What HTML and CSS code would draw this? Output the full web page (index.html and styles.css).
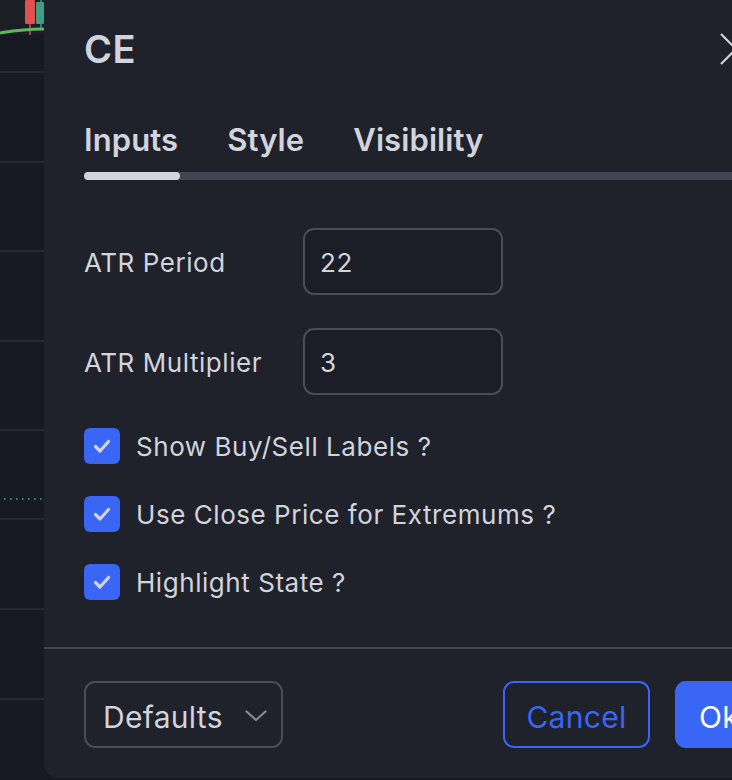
FILE: index.html
```html
<!DOCTYPE html>
<html>
<head>
<meta charset="utf-8">
<link rel="stylesheet" href="styles.css">
</head>
<body>
<div class="page">
  <div class="chart">
    <svg class="chart-svg" width="44" height="780" viewBox="0 0 44 780">
      <rect x="0" y="0" width="44" height="34" fill="#1b1f25"/>
      <g stroke="#262833" stroke-width="2">
        <line x1="0" y1="72" x2="44" y2="72"/>
        <line x1="0" y1="162" x2="44" y2="162"/>
        <line x1="0" y1="251" x2="44" y2="251"/>
        <line x1="0" y1="341" x2="44" y2="341"/>
        <line x1="0" y1="430" x2="44" y2="430"/>
        <line x1="0" y1="519" x2="44" y2="519"/>
        <line x1="0" y1="609" x2="44" y2="609"/>
        <line x1="0" y1="699" x2="44" y2="699"/>
      </g>
      <line x1="30" y1="0" x2="30" y2="35" stroke="#e0514f" stroke-width="1.5"/>
      <rect x="25" y="0" width="10" height="24" fill="#e0514f" rx="1"/>
      <line x1="41" y1="0" x2="41" y2="28" stroke="#3f9e84" stroke-width="1.5"/>
      <rect x="36" y="2" width="8" height="22" fill="#3f9e84" rx="1"/>
      <path d="M0 33 C 12 31, 22 29, 44 29" stroke="#5cb85c" stroke-width="3" fill="none"/>
      <line x1="4" y1="499" x2="44" y2="499" stroke="#4fa89a" stroke-width="1.5" stroke-dasharray="1.5 4.5"/>
    </svg>
  </div>
  <div class="dialog">
    <div class="header">
      <div class="title">CE</div>
      <svg class="close" width="32" height="32" viewBox="0 0 32 32">
        <path d="M1 1 L16 16 L1 31 M31 1 L16 16 L31 31" stroke="#d1d4dc" stroke-width="2.2" fill="none"/>
      </svg>
    </div>
    <div class="tabs">
      <div class="tab">Inputs</div>
      <div class="tab">Style</div>
      <div class="tab">Visibility</div>
    </div>
    <div class="track"><div class="track-active"></div></div>
    <div class="body">
      <div class="field">
        <div class="label">ATR Period</div>
        <div class="input">22</div>
      </div>
      <div class="field">
        <div class="label">ATR Multiplier</div>
        <div class="input">3</div>
      </div>
      <div class="check-row">
        <div class="checkbox"><svg width="36" height="36" viewBox="0 0 36 36"><path d="M11.5 18.5 L16 23 L24.5 13.5" stroke="#d1d4dc" stroke-width="3.2" fill="none" stroke-linecap="round" stroke-linejoin="round"/></svg></div>
        <div class="check-label">Show Buy/Sell Labels ?</div>
      </div>
      <div class="check-row">
        <div class="checkbox"><svg width="36" height="36" viewBox="0 0 36 36"><path d="M11.5 18.5 L16 23 L24.5 13.5" stroke="#d1d4dc" stroke-width="3.2" fill="none" stroke-linecap="round" stroke-linejoin="round"/></svg></div>
        <div class="check-label">Use Close Price for Extremums ?</div>
      </div>
      <div class="check-row">
        <div class="checkbox"><svg width="36" height="36" viewBox="0 0 36 36"><path d="M11.5 18.5 L16 23 L24.5 13.5" stroke="#d1d4dc" stroke-width="3.2" fill="none" stroke-linecap="round" stroke-linejoin="round"/></svg></div>
        <div class="check-label">Highlight State ?</div>
      </div>
    </div>
    <div class="footer">
      <div class="select">
        <span>Defaults</span>
        <svg width="22" height="12" viewBox="0 0 22 12"><path d="M1.5 1.5 L11 10 L20.5 1.5" stroke="#868993" stroke-width="2.2" fill="none" stroke-linecap="round" stroke-linejoin="round"/></svg>
      </div>
      <div class="buttons">
        <div class="btn btn-cancel">Cancel</div>
        <div class="btn btn-ok">Ok</div>
      </div>
    </div>
  </div>
</div>
</body>
</html>
```
FILE: styles.css
```css
* { box-sizing: border-box; }
html, body {
  margin: 0;
  padding: 0;
  width: 732px;
  height: 780px;
  overflow: hidden;
  background: #181a23;
}
body {
  font-family: Inter, "Noto Sans", sans-serif;
  color: #d1d4dc;
}
.page {
  display: flex;
  width: 820px;
  height: 780px;
}
.chart {
  width: 44px;
  flex: 0 0 44px;
  height: 780px;
  background: #181a23;
}
.chart-svg { display: block; }
.dialog {
  flex: 0 0 740px;
  width: 740px;
  height: 778px;
  background: #1f212b;
  border-bottom-left-radius: 14px;
  display: flex;
  flex-direction: column;
}
.header {
  height: 98px;
  display: flex;
  align-items: center;
  padding-left: 40px;
  padding-right: 32px;
}
.title {
  font-size: 38px;
  font-weight: 600;
  letter-spacing: 0.5px;
  line-height: 40px;
  color: #d1d4dc;
}
.close {
  margin-left: auto;
  display: block;
}
.tabs {
  display: flex;
  gap: 49px;
  margin-top: 22px;
  padding-left: 40px;
  height: 40px;
  align-items: center;
}
.tab {
  font-size: 31px;
  font-weight: 600;
  letter-spacing: 0.1px;
  line-height: 40px;
  color: #d1d4dc;
}
.track {
  margin-top: 12px;
  margin-left: 40px;
  height: 8px;
  background: #434651;
  border-radius: 4px 0 0 4px;
}
.track-active {
  width: 96px;
  height: 8px;
  border-radius: 4px;
  background: #d1d4dc;
}
.body {
  padding: 48px 0 0 40px;
  display: flex;
  flex-direction: column;
  gap: 33px;
}
.field {
  display: flex;
  align-items: center;
  height: 67px;
}
.label {
  width: 219px;
  font-size: 26px;
  letter-spacing: 0.55px;
  line-height: 32px;
  padding-top: 3px;
  color: #d1d4dc;
}
.input {
  width: 200px;
  height: 67px;
  border: 2px solid #4a4d58;
  border-radius: 11px;
  background: #1c1e27;
  font-size: 26px;
  letter-spacing: 0.55px;
  line-height: 32px;
  padding: 17px 0 0 15px;
  color: #d1d4dc;
}
.check-row {
  display: flex;
  align-items: center;
  height: 36px;
  gap: 16px;
  margin-bottom: -1px;
}
.checkbox {
  width: 36px;
  height: 36px;
  border-radius: 6px;
  background: #3a66f5;
}
.checkbox svg { display: block; }
.check-label {
  font-size: 26px;
  letter-spacing: 0.55px;
  line-height: 32px;
  padding-top: 2px;
  color: #d1d4dc;
}
.footer {
  margin-top: 48px;
  border-top: 2px solid #434651;
  padding: 32px 0 0 40px;
  display: flex;
}
.select {
  width: 199px;
  height: 67px;
  border: 2px solid #4a4d58;
  border-radius: 11px;
  display: flex;
  align-items: center;
  padding-left: 17px;
  padding-right: 14px;
  padding-top: 4px;
  font-size: 30px;
  letter-spacing: 0.3px;
  color: #d1d4dc;
}
.select span { flex: 1; }
.select svg { display: block; margin-top: -2px; }
.buttons {
  display: flex;
  gap: 25px;
  margin-left: 220px;
}
.btn {
  height: 67px;
  border-radius: 11px;
  display: flex;
  align-items: center;
  justify-content: center;
  padding-top: 4px;
  font-size: 30px;
  letter-spacing: 0.3px;
}
.btn-cancel {
  width: 147px;
  border: 2px solid #3a66f5;
  color: #3a66f5;
}
.btn-ok {
  width: 100px;
  justify-content: flex-start;
  padding-left: 24px;
  background: #3a66f5;
  color: #ffffff;
}
```
